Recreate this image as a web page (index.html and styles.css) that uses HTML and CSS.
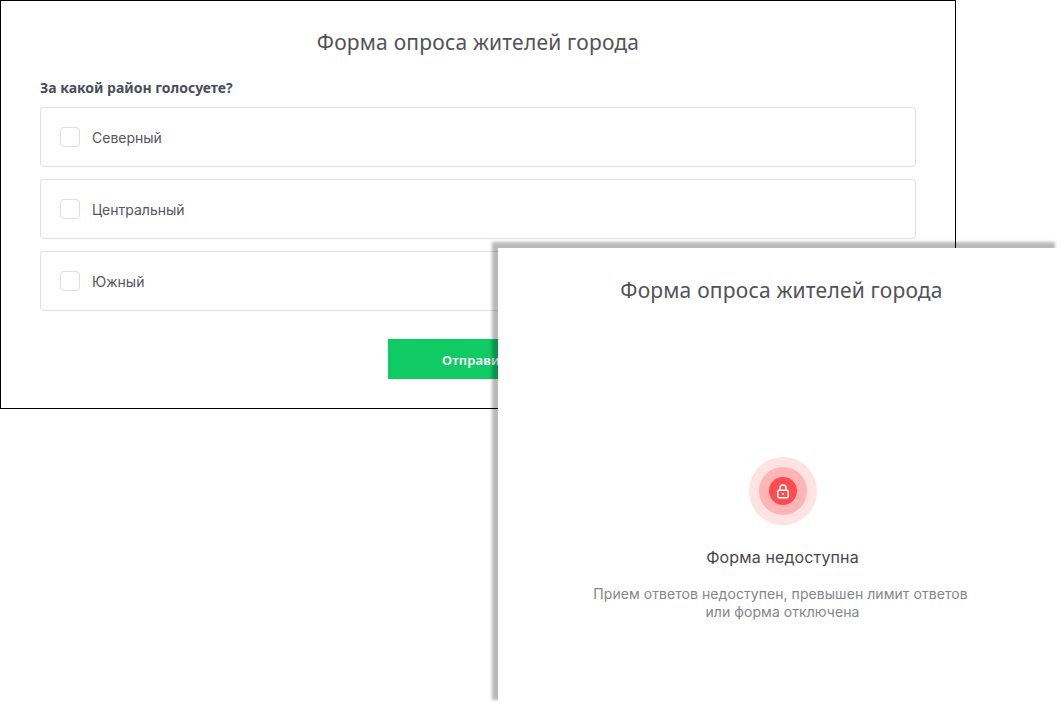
FILE: index.html
```html
<!DOCTYPE html>
<html lang="ru">
<head>
<meta charset="utf-8">
<title>Форма опроса</title>
<link rel="stylesheet" href="styles.css">
</head>
<body>
<section class="window window-form">
  <h1 class="title">Форма опроса жителей города</h1>
  <h2 class="question">За какой район голосуете?</h2>
  <div class="options">
    <label class="option"><span class="check"></span><span>Северный</span></label>
    <label class="option"><span class="check"></span><span>Центральный</span></label>
    <label class="option"><span class="check"></span><span>Южный</span></label>
  </div>
  <div class="actions"><button class="submit">Отправить</button></div>
</section>
<section class="window window-locked">
  <div class="locked-inner">
    <h1 class="title">Форма опроса жителей города</h1>
    <div class="state">
      <div class="ring-outer"><div class="ring-mid"><div class="ring-core">
        <svg class="lock" width="14" height="15" viewBox="0 0 14 15" fill="none" stroke="#fff" stroke-width="1.5">
          <path d="M4 6.5V4a3 3 0 0 1 6 0v2.5"/>
          <rect x="1.75" y="6.25" width="10.5" height="7.5" rx="1.5"/>
          <circle cx="7" cy="10" r="1.1" fill="#fff" stroke="none"/>
        </svg>
      </div></div></div>
      <h2 class="state-title">Форма недоступна</h2>
      <p class="state-text">Прием ответов недоступен, превышен лимит ответов<br><span class="state-line">или форма отключена</span></p>
    </div>
  </div>
</section>
</body>
</html>
```
FILE: styles.css
```css
* { box-sizing: border-box; }
html, body { margin: 0; height: 100%; background: #fff; }
body { position: relative; width: 1061px; height: 705px; overflow: hidden; font-family: Inter, "Liberation Sans", sans-serif; }
.window { position: absolute; background: #fff; }
.window-form { left: 0; top: 0; width: 956px; height: 409px; border: 1px solid #000; padding: 0 39px; }
.window-locked { left: 498px; top: 248px; width: 563px; height: 458px; box-shadow: -6px -6px 3px rgba(0, 0, 0, .28); }
.locked-inner { width: 567px; height: 100%; }
.title { margin: 0; font-family: "Noto Sans", sans-serif; font-weight: 400; font-size: 21px; letter-spacing: .2px; line-height: 28px; color: #525258; text-align: center; }
.window-form .title { padding-top: 27px; }
.window-locked .title { padding-top: 28px; }
.question { margin: 22px 0 9px; font-family: "Noto Sans", sans-serif; font-size: 14px; font-weight: 700; line-height: 20px; color: #4b4d5c; }
.options { display: flex; flex-direction: column; gap: 12px; }
.option { display: flex; align-items: center; gap: 12px; height: 60px; padding: 0 19px; border: 1px solid #e0e0e0; border-radius: 4px; font-size: 14px; color: #55565f; }
.check { width: 20px; height: 20px; border: 1px solid #dedede; border-radius: 4px; }
.actions { display: flex; justify-content: center; margin-top: 28px; }
.submit { width: 180px; height: 40px; padding-top: 2px; border: 0; background: #10cb63; color: #fff; font-family: "Noto Sans", sans-serif; font-size: 13px; font-weight: 600; letter-spacing: .2px; }
.state { display: flex; flex-direction: column; align-items: center; margin-top: 153px; }
.ring-outer { display: flex; align-items: center; justify-content: center; width: 68px; height: 68px; margin-left: 3px; border-radius: 50%; background: #ffe3e3; }
.ring-mid { display: flex; align-items: center; justify-content: center; width: 48px; height: 48px; border-radius: 50%; background: #ffb5b5; }
.ring-core { display: flex; align-items: center; justify-content: center; width: 28px; height: 28px; border-radius: 50%; background: #ff4d4f; }
.state-title { margin: 22px 0 0 2px; font-size: 16px; font-weight: 400; letter-spacing: .12px; line-height: 20px; color: #48484c; }
.state-text { margin: 18px 0 0 -2px; font-size: 14px; letter-spacing: .06px; line-height: 18px; color: #85858a; text-align: center; }
.state-line { display: inline-block; padding-left: 4px; }
```
